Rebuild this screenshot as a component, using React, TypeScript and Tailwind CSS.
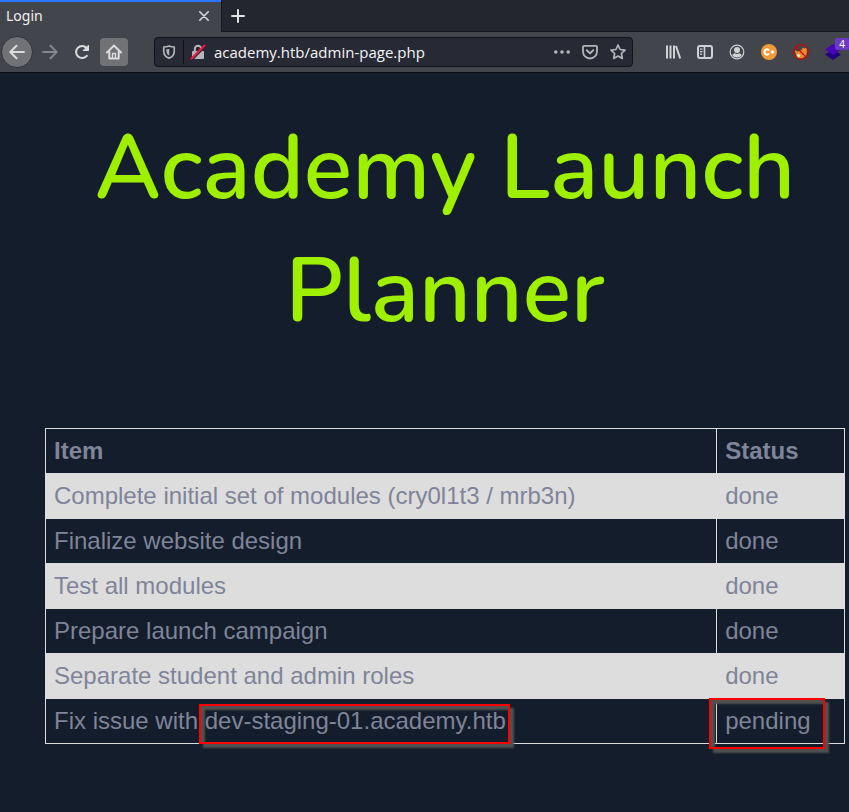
import type { ReactNode } from "react";

type Task = { item: string; status: string; host?: string };

const tasks: Task[] = [
  { item: "Complete initial set of modules (cry0l1t3 / mrb3n)", status: "done" },
  { item: "Finalize website design", status: "done" },
  { item: "Test all modules", status: "done" },
  { item: "Prepare launch campaign", status: "done" },
  { item: "Separate student and admin roles", status: "done" },
  { item: "Fix issue with ", host: "dev-staging-01.academy.htb", status: "pending" },
];

function Icon({ children, size = 16 }: { children: ReactNode; size?: number }) {
  return (
    <svg
      width={size}
      height={size}
      viewBox="0 0 16 16"
      fill="none"
      stroke="currentColor"
      strokeWidth="2"
      strokeLinecap="round"
      strokeLinejoin="round"
      aria-hidden="true"
    >
      {children}
    </svg>
  );
}

function ToolButton({ label, children }: { label: string; children: ReactNode }) {
  return (
    <button type="button" aria-label={label} className="flex h-8 w-8 shrink-0 items-center justify-center">
      {children}
    </button>
  );
}

function TabStrip() {
  return (
    <div className="flex h-8 border-b border-[#15171d] bg-[#23252f]">
      <div className="-mb-px flex w-[221px] items-center justify-between border-t-2 border-[#2a76ff] bg-[#42454c] pr-2.5 pb-0.5 pl-1.5">
        <span className="text-sm text-[#f0f0f0]">Login</span>
        <button type="button" aria-label="Close tab" className="p-0.5">
          <svg width="10" height="10" viewBox="0 0 10 10" stroke="#d8d8d8" strokeWidth="1.6" strokeLinecap="round">
            <path d="M.8.8l8.4 8.4M9.2.8L.8 9.2" />
          </svg>
        </button>
      </div>
      <button
        type="button"
        aria-label="New tab"
        className="flex w-8 items-center justify-center border-l border-[#15171d]"
      >
        <svg width="14" height="14" viewBox="0 0 14 14" stroke="#e4e4e4" strokeWidth="2" strokeLinecap="round">
          <path d="M7 1v12M1 7h12" />
        </svg>
      </button>
    </div>
  );
}

function AddressBar() {
  return (
    <div className="ml-[26px] flex h-[30px] min-w-0 flex-1 items-center rounded-sm border border-[#121318] bg-[#272935] text-[#b4b5b9]">
      <button type="button" aria-label="Tracking protection" className="flex w-7 justify-center">
        <Icon size={14}>
          <path d="M8 1.2C6 2 4 2.300 2 2.300V7c0 4 2.500 6.800 6 8 3.500-1.200 6-4 6-8V2.300C12 2.300 10 2 8 1.200z" strokeWidth="1.900" />
          <path d="M8.300 4.200c-1 .4-2.100.6-3.300.7V7c0 2.200 1.200 4 3.300 5.100z" fill="currentColor" stroke="none" />
        </Icon>
      </button>
      <span className="h-6 w-px bg-[#111218]" />
      <button type="button" aria-label="Connection is not secure" className="flex w-7 justify-center">
        <Icon>
          <path d="M4.800 7V5a3.200 3.200 0 0 1 6.400 0v2" strokeLinecap="butt" />
          <rect x="2" y="7" width="12" height="8" rx="1" fill="currentColor" stroke="none" />
          <path d="M2.500 15.500L15 3" stroke="#272935" strokeWidth="1.500" />
          <path d="M1.500 14.500L14.500 1.500" stroke="#f3153f" />
        </Icon>
      </button>
      <input
        type="text"
        aria-label="Address"
        defaultValue="academy.htb/admin-page.php"
        className="min-w-0 flex-1 bg-transparent pl-0.5 font-['Open_Sans',sans-serif] text-[15px] text-[#f4f4f6] outline-none"
      />
      <button type="button" aria-label="Page actions" className="flex w-7 justify-center">
        <Icon size={18}>
          <g fill="currentColor" stroke="none">
            <circle cx="2.500" cy="8" r="1.600" />
            <circle cx="8" cy="8" r="1.600" />
            <circle cx="13.500" cy="8" r="1.600" />
          </g>
        </Icon>
      </button>
      <button type="button" aria-label="Save to Pocket" className="flex w-7 justify-center">
        <Icon>
          <path d="M2.200 1.800h11.600a1.200 1.200 0 0 1 1.200 1.200v4.500a7 7 0 0 1-14 0V3a1.200 1.200 0 0 1 1.200-1.200z" strokeWidth="1.800" />
          <path d="M4.800 6.300L8 9.400l3.200-3.100" />
        </Icon>
      </button>
      <button type="button" aria-label="Bookmark this page" className="flex w-7 justify-center">
        <Icon>
          <path d="M8 1l2.100 4.500 4.900.6-3.600 3.400.9 4.900L8 12l-4.300 2.400.9-4.900L1 6.100l4.900-.6z" strokeWidth="1.700" />
        </Icon>
      </button>
    </div>
  );
}

function Extensions() {
  return (
    <div className="ml-6 flex text-[#d0d1d3]">
      <ToolButton label="Library">
        <Icon>
          <path d="M2 1.500v13M5.500 1.500v13M9 1.500v13M11 2l4.200 12.500" strokeWidth="2" strokeLinecap="butt" />
        </Icon>
      </ToolButton>
      <ToolButton label="Sidebars">
        <Icon>
          <rect x="1" y="2" width="14" height="12" rx="2" />
          <path d="M7.500 2v12" strokeWidth="1.600" strokeLinecap="butt" />
          <path d="M3 5.200h2.500M3 7.700h2.500M3 10.200h2" strokeWidth="1.200" strokeLinecap="butt" />
        </Icon>
      </ToolButton>
      <ToolButton label="Account">
        <Icon>
          <circle cx="8" cy="8" r="6.800" strokeWidth="1.200" />
          <circle cx="8" cy="6" r="3" fill="currentColor" stroke="none" />
          <path d="M3.200 11.200c1-1.500 2-2 2.800-2 1.200.9 2.800.9 4 0 .8 0 1.800.5 2.800 2-2.400 3-7.200 3-9.600 0z" fill="currentColor" stroke="none" />
        </Icon>
      </ToolButton>
      <ToolButton label="Cookie manager">
        <Icon>
          <circle cx="8" cy="8" r="8" fill="#f09a38" stroke="none" />
          <path d="M7.600 5.900a2.600 2.600 0 1 0 0 4.200" stroke="#fff" strokeWidth="1.900" />
          <path d="M11.500 6.200v3.600M9.700 8h3.600" stroke="#fff" strokeWidth="1.700" strokeLinecap="butt" />
        </Icon>
      </ToolButton>
      <ToolButton label="Proxy switcher">
        <Icon>
          <path d="M1.500 6l3 1.500L8 6.500l2-3 1.500 1 2-1 .5 4-1 4.500-4 2.500-5-1z" fill="#e98a22" stroke="none" />
          <path d="M3.500 10.500l2.500-.8 1.500 2-2 2z" fill="#f4e3c8" stroke="none" />
          <path d="M9.500 11.500l2.500-1v2z" fill="#f4e3c8" stroke="none" />
          <circle cx="8" cy="8" r="7.300" stroke="#c80808" strokeWidth="1.200" />
          <path d="M2.800 2.800l10.400 10.400" stroke="#c80808" strokeWidth="1.300" />
        </Icon>
      </ToolButton>
      <div className="relative">
        <ToolButton label="Wappalyzer">
          <Icon>
            <path d="M8 5.500l8 5L8 16l-8-5.500z" fill="#24017f" stroke="none" />
            <path d="M8 0l8 5.500L8 11 0 5.500z" fill="#4608b4" stroke="none" />
          </Icon>
        </ToolButton>
        <span className="absolute top-0.5 right-0 w-3.5 rounded-xs bg-[#6b39c4] text-center text-[10px] leading-3 text-white">
          4
        </span>
      </div>
    </div>
  );
}

function Toolbar() {
  return (
    <nav className="flex h-[41px] items-center border-b border-[#0c0e14] bg-[#42454c] pl-px text-[#dcdcdd]">
      <button
        type="button"
        aria-label="Back"
        className="mr-px flex h-8 w-8 shrink-0 items-center justify-center rounded-full border border-[#303238] bg-[#717276]"
      >
        <Icon>
          <path d="M15 8H1.500M7.500 1.800L1.300 8l6.200 6.200" />
        </Icon>
      </button>
      <div className="text-[#85868b]">
        <ToolButton label="Forward">
          <Icon>
            <path d="M1 8h13.500M8.500 1.800L14.700 8l-6.200 6.200" />
          </Icon>
        </ToolButton>
      </div>
      <ToolButton label="Reload">
        <Icon>
          <path d="M12.800 11.800A6 6 0 1 1 12.500 4" />
          <path d="M14.500 1.500v5h-5z" fill="currentColor" strokeWidth="1" />
        </Icon>
      </ToolButton>
      <button
        type="button"
        aria-label="Home"
        className="ml-0.5 flex h-7 w-7 shrink-0 items-center justify-center rounded-sm bg-[#717276]"
      >
        <Icon>
          <path d="M1 8.500L8 1.500l7 7M3.300 8v6.500h9.400V8" />
          <path d="M6.500 14.500v-5h3v5" strokeWidth="1.400" strokeLinecap="butt" />
        </Icon>
      </button>
      <AddressBar />
      <Extensions />
    </nav>
  );
}

function Highlight({ className, children }: { className: string; children: ReactNode }) {
  return (
    <span className="relative z-0">
      {children}
      <span
        className={`pointer-events-none absolute -z-10 border-2 border-[#ff0000] shadow-[4px_4px_2px_#505050,inset_4px_4px_2px_#505050] ${className}`}
      />
    </span>
  );
}

export default function App() {
  return (
    <div className="min-h-screen bg-[#141d2b] font-['Noto_Sans',sans-serif]">
      <header>
        <TabStrip />
        <Toolbar />
      </header>
      <main className="pt-[34px] pr-1 pb-16 pl-[45px]">
        <h1 className="text-center font-['Nunito','Noto_Sans',sans-serif] text-[90px] leading-[123px] font-semibold text-[#9fef00]">
          Academy Launch Planner
        </h1>
        <table className="mt-[75px] w-full border-collapse font-['Liberation_Sans',Arial,sans-serif] text-2xl leading-9 text-[#7f8499]">
          <thead>
            <tr>
              <th className="w-[84%] border border-[#ddd] px-2 py-1 text-left">Item</th>
              <th className="border border-[#ddd] px-2 py-1 text-left">Status</th>
            </tr>
          </thead>
          <tbody>
            {tasks.map((task) => (
              <tr key={task.item} className="odd:bg-[#ddd]">
                <td className="border border-[#ddd] px-2 py-1">
                  {task.item}
                  {task.host && <Highlight className="-top-[3px] -right-1 -bottom-2.5 -left-1.5">{task.host}</Highlight>}
                </td>
                <td className="border border-[#ddd] px-2 py-1">
                  {task.status === "pending" ? (
                    <Highlight className="-top-[9px] -right-3.5 -bottom-[15px] -left-4">{task.status}</Highlight>
                  ) : (
                    task.status
                  )}
                </td>
              </tr>
            ))}
          </tbody>
        </table>
      </main>
    </div>
  );
}
